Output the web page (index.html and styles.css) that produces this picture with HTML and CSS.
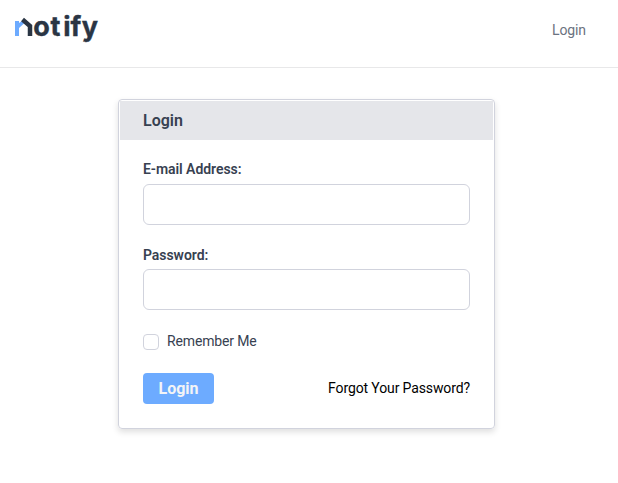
FILE: index.html
```html
<!DOCTYPE html>
<html lang="en">
<head>
    <meta charset="UTF-8">
    <meta name="viewport" content="width=device-width, initial-scale=1.0">
    <title>Notify - Login</title>
    <link rel="stylesheet" href="styles.css">
</head>
<body>

    <header class="navbar">
        <a href="#" class="logo" aria-label="notify">
            <svg width="90" height="40" viewBox="0 -4 90 40">
                <path d="M1 8h4v2l3-2h1.500l1 2L5 15v8H1z" fill="#6dabff"/>
                <path d="M8.500 6.500L16 13v10" fill="none" stroke="#2a3544" stroke-width="4.500"/>
                <text x="19.200 36.500 49.300 56.500 67.700" y="23">otify</text>
            </svg>
        </a>
        <a href="#" class="nav-link">Login</a>
    </header>

    <main class="card">
        <div class="card-header">Login</div>

        <form class="card-body" action="#" method="post">
            <label class="field-label" for="email">E-mail Address:</label>
            <input class="field" type="email" id="email" name="email">

            <label class="field-label" for="password">Password:</label>
            <input class="field" type="password" id="password" name="password">

            <label class="remember">
                <input type="checkbox" name="remember">
                <span>Remember Me</span>
            </label>

            <div class="actions">
                <button type="submit">Login</button>
                <a href="#">Forgot Your Password?</a>
            </div>
        </form>
    </main>

</body>
</html>
```

FILE: styles.css
```css
* {
    box-sizing: border-box;
}

body {
    min-height: 100vh;
    margin: 0;
    font-family: Roboto, sans-serif;
    font-size: 14px;
    line-height: 20px;
    color: #374151;
    background-color: #fff;
}

a {
    text-decoration: none;
}

.navbar {
    display: flex;
    justify-content: space-between;
    height: 68px;
    padding: 9px 32px 0 14px;
    border-bottom: 1px solid #e8e8e9;
}

.logo svg {
    display: block;
}

.logo text {
    font-family: Inter, sans-serif;
    font-size: 27px;
    font-weight: 700;
    fill: #2a3544;
    stroke: #2a3544;
    stroke-width: 0.4px;
}

.nav-link {
    margin-top: 11px;
    color: #6b7280;
    letter-spacing: -0.1px;
}

.card {
    width: 377px;
    height: 330px;
    margin: 31px 0 0 118px;
    padding: 1px;
    border: 1px solid #d1d3dd;
    border-radius: 4px;
    box-shadow: 0 3px 6px rgba(0, 0, 0, 0.13);
}

.card-header {
    height: 39px;
    padding: 0 23px;
    font-size: 16px;
    font-weight: 600;
    line-height: 39px;
    background-color: #e5e6ea;
}

.card-body {
    padding: 19px 23px 0;
}

.field-label {
    display: block;
    margin-bottom: 5px;
    font-weight: 600;
    letter-spacing: -0.05px;
}

.field {
    display: block;
    width: 100%;
    height: 41px;
    margin-bottom: 20px;
    padding: 8px 12px;
    border: 1px solid #d1d3dd;
    border-radius: 6px;
}

.field + .field-label {
    margin-bottom: 4px;
}

.remember {
    display: flex;
    align-items: center;
    margin-top: 21px;
    letter-spacing: -0.15px;
}

.remember input {
    appearance: none;
    width: 16px;
    height: 16px;
    margin: 1px 8px 0 0;
    border: 1px solid #d1d3dd;
    border-radius: 4px;
}

.actions {
    display: flex;
    align-items: center;
    justify-content: space-between;
    margin-top: 22px;
}

.actions button {
    width: 71px;
    height: 31px;
    padding: 0;
    font-family: inherit;
    font-size: 16px;
    font-weight: 700;
    color: #f3f4f6;
    background-color: #6dabff;
    border: none;
    border-radius: 4px;
}

.actions a {
    margin-bottom: 2px;
    letter-spacing: -0.12px;
    color: #000;
}
```
